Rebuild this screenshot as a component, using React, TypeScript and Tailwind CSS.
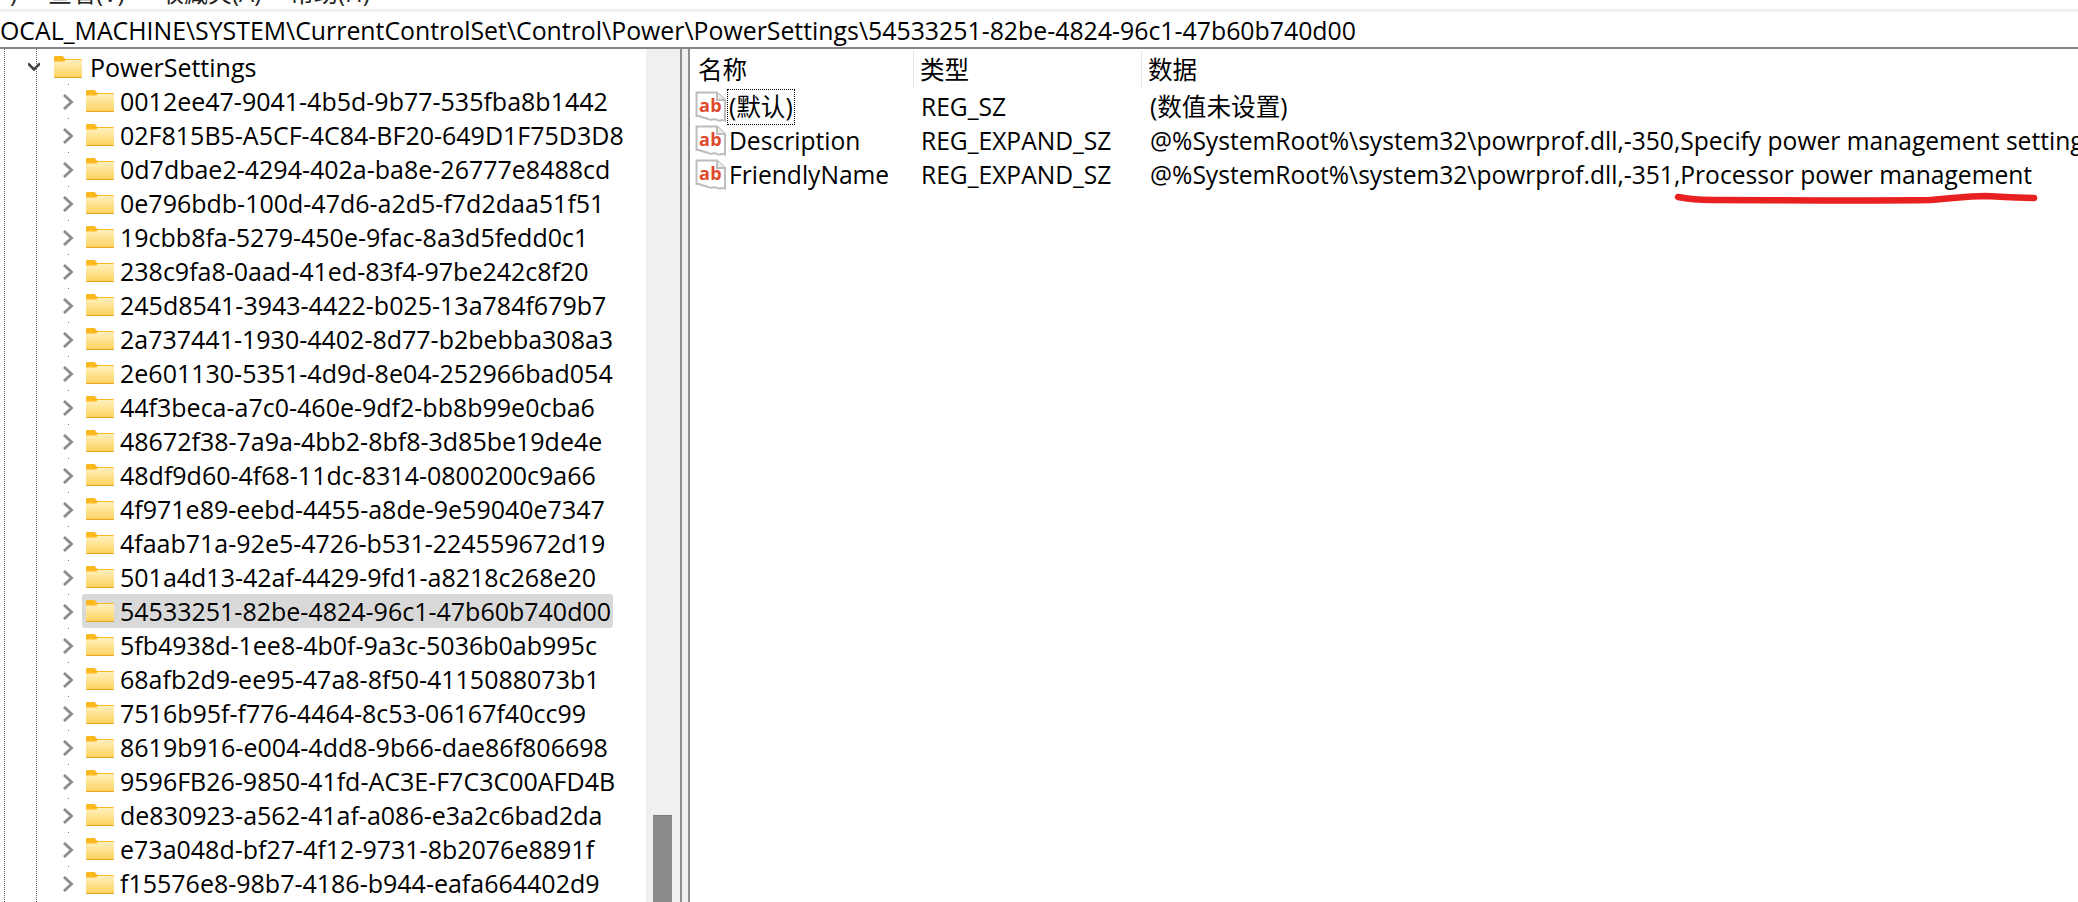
const keys = [
  "0012ee47-9041-4b5d-9b77-535fba8b1442",
  "02F815B5-A5CF-4C84-BF20-649D1F75D3D8",
  "0d7dbae2-4294-402a-ba8e-26777e8488cd",
  "0e796bdb-100d-47d6-a2d5-f7d2daa51f51",
  "19cbb8fa-5279-450e-9fac-8a3d5fedd0c1",
  "238c9fa8-0aad-41ed-83f4-97be242c8f20",
  "245d8541-3943-4422-b025-13a784f679b7",
  "2a737441-1930-4402-8d77-b2bebba308a3",
  "2e601130-5351-4d9d-8e04-252966bad054",
  "44f3beca-a7c0-460e-9df2-bb8b99e0cba6",
  "48672f38-7a9a-4bb2-8bf8-3d85be19de4e",
  "48df9d60-4f68-11dc-8314-0800200c9a66",
  "4f971e89-eebd-4455-a8de-9e59040e7347",
  "4faab71a-92e5-4726-b531-224559672d19",
  "501a4d13-42af-4429-9fd1-a8218c268e20",
  "54533251-82be-4824-96c1-47b60b740d00",
  "5fb4938d-1ee8-4b0f-9a3c-5036b0ab995c",
  "68afb2d9-ee95-47a8-8f50-4115088073b1",
  "7516b95f-f776-4464-8c53-06167f40cc99",
  "8619b916-e004-4dd8-9b66-dae86f806698",
  "9596FB26-9850-41fd-AC3E-F7C3C00AFD4B",
  "de830923-a562-41af-a086-e3a2c6bad2da",
  "e73a048d-bf27-4f12-9731-8b2076e8891f",
  "f15576e8-98b7-4186-b944-eafa664402d9",
];

const selectedKey = "54533251-82be-4824-96c1-47b60b740d00";

const values = [
  { name: "(默认)", type: "REG_SZ", data: "(数值未设置)", focused: true },
  {
    name: "Description",
    type: "REG_EXPAND_SZ",
    data: "@%SystemRoot%\\system32\\powrprof.dll,-350,Specify power management settings",
  },
  {
    name: "FriendlyName",
    type: "REG_EXPAND_SZ",
    data: "@%SystemRoot%\\system32\\powrprof.dll,-351,Processor power management",
  },
];

function Folder() {
  return (
    <svg width="30" height="24" viewBox="0 0 30 24" className="shrink-0">
      <defs>
        <linearGradient id="folderFill" x1="0" y1="0" x2="0" y2="1">
          <stop offset="0" stopColor="#fff0bd" />
          <stop offset="1" stopColor="#fcd25c" />
        </linearGradient>
      </defs>
      <path d="M1 2.5C1 1.5 1.6 1 2.5 1H9.5L12.5 4H28C28.6 4 29 4.4 29 5V8H1Z" fill="#fbb91f" />
      <path d="M1 6.5H11L13 5H28C28.6 5 29 5.4 29 6V22C29 22.6 28.6 23 28 23H2C1.4 23 1 22.6 1 22Z" fill="url(#folderFill)" />
      <path d="M1 22H29V22.2C29 22.7 28.6 23 28 23H2C1.4 23 1 22.7 1 22.2Z" fill="#eaa21d" />
    </svg>
  );
}

function Chevron({ open }: { open?: boolean }) {
  return (
    <svg width="12" height="18" viewBox="0 0 12 18" className="mt-[2px] shrink-0">
      {open ? (
        <path d="M0 4.5L6 10.5L12 4.5" fill="none" stroke="#404040" strokeWidth="2.6" />
      ) : (
        <path d="M2 2L9.5 9L2 16" fill="none" stroke="#8c8c8c" strokeWidth="2.8" />
      )}
    </svg>
  );
}

function ValueIcon() {
  return (
    <svg width="32" height="32" viewBox="0 0 32 32" className="shrink-0">
      <path d="M1.5 1.5H22L30 9V29.5C27 27.5 25 31 22 29C19 27 16 30 13 28C10 26.5 8 27 4 25H1.5Z" fill="#ffffff" stroke="#bdbdbd" strokeWidth="2" />
      <path d="M22 1.5V9H30" fill="#ededed" stroke="#bdbdbd" strokeWidth="2" />
      <text x="4" y="21" fontSize="18" fontWeight="700" letterSpacing="0.5" fill="#e0492c" fontFamily="'Open Sans', sans-serif">
        ab
      </text>
    </svg>
  );
}

export default function App() {
  return (
    <div className="relative flex h-[902px] w-[2078px] flex-col overflow-hidden bg-white font-['Open_Sans','Noto_Sans_CJK_SC',sans-serif] text-[25px] leading-[34px] text-black">
      {/* menu bar, only the bottom of the labels is left in the shot */}
      <div className="flex h-[12px] shrink-0 items-start overflow-hidden whitespace-nowrap border-b-[3px] border-[#f0f0f0] text-[24px] text-[#222]">
        <span className="mt-[-24px] w-[48px] shrink-0 pl-[10px]">)</span>
        <span className="mt-[-24px] w-[112px] shrink-0">查看(V)</span>
        <span className="mt-[-24px] w-[130px] shrink-0">收藏夹(A)</span>
        <span className="mt-[-24px] shrink-0">帮助(H)</span>
      </div>

      {/* address bar */}
      <div className="flex h-[37px] shrink-0 items-center overflow-hidden whitespace-nowrap border-b-[2px] border-[#84858a] text-[24.85px]">
        OCAL_MACHINE\SYSTEM\CurrentControlSet\Control\Power\PowerSettings\54533251-82be-4824-96c1-47b60b740d00
      </div>

      <div className="flex min-h-0 flex-1">
        {/* key tree */}
        <div className="relative flex w-[680px] shrink-0">
          <div className="absolute bottom-0 left-[4px] top-0 border-l border-dotted border-[#666]" />
          <div className="absolute bottom-0 left-[36px] top-0 border-l border-dotted border-[#666]" />
          <div className="min-w-0 flex-1 overflow-hidden pt-[1px]">
            <div className="flex h-[34px] items-center pl-[28px]">
              <Chevron open />
              <div className="ml-[13px]">
                <Folder />
              </div>
              <span className="ml-[7px] whitespace-nowrap">PowerSettings</span>
            </div>
            {keys.map((key) => (
              <div key={key} className="relative flex h-[34px] items-center pl-[62px]">
                <div className="absolute left-[68px] top-0 h-px w-px bg-[#777]" />
                <Chevron />
                <div
                  className={
                    key === selectedKey
                      ? "ml-[8px] flex h-[34px] w-[531px] items-center rounded-[3px] bg-[#d9d9d9] pl-[3px]"
                      : "ml-[8px] flex h-[34px] items-center pl-[3px]"
                  }
                >
                  <Folder />
                  <span className="ml-[5px] whitespace-nowrap">{key}</span>
                </div>
              </div>
            ))}
          </div>
          {/* scrollbar */}
          <div className="relative w-[34px] shrink-0 bg-[#f0f0f0]">
            <div className="absolute bottom-0 left-[7px] top-[766px] w-[19px] border-t border-[#7a7a7a] bg-[#8a8a8a]" />
          </div>
        </div>

        {/* splitter */}
        <div className="w-[10px] shrink-0 border-x-[2px] border-[#8e8f93] bg-[#f0f0f0]" />

        {/* value list */}
        <div className="min-w-0 flex-1 overflow-hidden whitespace-nowrap text-[24.6px]">
          <div className="flex h-[41px] items-center">
            <div className="flex h-[38px] w-[224px] shrink-0 items-center border-r border-[#e5e5e5] pl-[8px]">名称</div>
            <div className="flex h-[38px] w-[228px] shrink-0 items-center border-r border-[#e5e5e5] pl-[6px]">类型</div>
            <div className="flex h-[38px] items-center pl-[6px]">数据</div>
          </div>
          {values.map((row) => (
            <div key={row.name} className="flex h-[34px] items-center">
              <div className="flex w-[224px] shrink-0 items-center pl-[5px]">
                <ValueIcon />
                <span
                  className={
                    row.focused
                      ? "border border-dotted border-black px-[1px]"
                      : "ml-[1px] px-[1px]"
                  }
                >
                  {row.name}
                </span>
              </div>
              <div className="w-[228px] shrink-0 pl-[7px]">{row.type}</div>
              <div className="pl-[8px]">{row.data}</div>
            </div>
          ))}
        </div>
      </div>

      {/* red hand-drawn underline */}
      <svg className="absolute left-[1670px] top-[188px]" width="375" height="20" viewBox="0 0 375 20">
        <path
          d="M8 9C18 11 28 12 42 12C110 12 190 13 260 12C285 10 300 8 316 8C333 9 348 10 364 10"
          fill="none"
          stroke="#e8201f"
          strokeWidth="6.5"
          strokeLinecap="round"
        />
      </svg>
    </div>
  );
}
